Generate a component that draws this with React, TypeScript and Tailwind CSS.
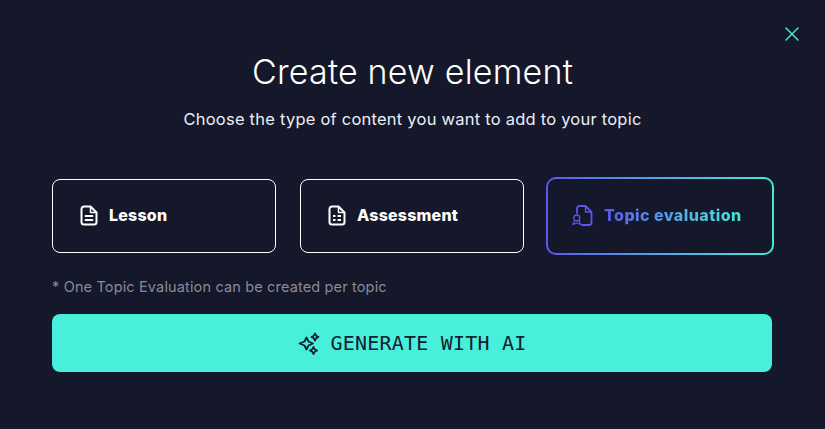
import { X } from "lucide-react";

function LessonIcon() {
  return (
    <svg width="18" height="21" viewBox="0 0 18 21" fill="none" stroke="currentColor" strokeWidth="2" strokeLinejoin="round" strokeLinecap="round">
      <path d="M4 1.500h6.500l6 6V17a2.500 2.500 0 0 1-2.500 2.500H4A2.500 2.500 0 0 1 1.500 17V4A2.500 2.500 0 0 1 4 1.500Z" />
      <path d="M10.500 2V7.500H16" strokeWidth="1.500" />
      <path d="M5.500 11h7M5.500 15h7" strokeWidth="1.800" />
    </svg>
  );
}

function AssessmentIcon() {
  return (
    <svg width="18" height="21" viewBox="0 0 18 21" fill="none" stroke="currentColor" strokeWidth="2" strokeLinejoin="round" strokeLinecap="round">
      <path d="M4 1.500h6.500l6 6V17a2.500 2.500 0 0 1-2.500 2.500H4A2.500 2.500 0 0 1 1.500 17V4A2.500 2.500 0 0 1 4 1.500Z" />
      <path d="M10.500 2V7.500H16" strokeWidth="1.500" />
      <path d="M5 11h2.500M9.500 11H13M5 15h2.500M9.500 15H13" strokeWidth="2" strokeLinecap="butt" />
    </svg>
  );
}

function EvaluationIcon() {
  return (
    <svg width="21" height="21" viewBox="0 0 21 21" fill="none" stroke="#5b56ee" strokeWidth="1.800" strokeLinejoin="round" strokeLinecap="round">
      <path d="M5 8V3.500A2.500 2.500 0 0 1 7.500 1h6l6 6v10.500a2.500 2.500 0 0 1-2.500 2.500H10" />
      <path d="M13.500 1.500V7h5.500" strokeWidth="1.400" />
      <circle cx="4.800" cy="13" r="3" strokeWidth="1.300" />
      <path d="M2.600 15.500 1 19.500l3.800-1.500 3.800 1.500L7 15.500" strokeWidth="1.200" />
    </svg>
  );
}

function SparkleIcon() {
  return (
    <svg width="23" height="23" viewBox="0 0 23 23" fill="none" stroke="#15202e" strokeWidth="1.800" strokeLinejoin="round">
      <path d="M8.500 5.500 10.500 9.500 15 11.500 10.500 13.500 8.500 17.500 6.500 13.500 1.500 11.500 6.500 9.500Z" />
      <path d="M17 1.500 18.200 3.800 20.500 5 18.200 6.200 17 8.500 15.800 6.200 13.500 5 15.800 3.800Z" />
      <path d="M15.500 15 16.700 17.300 19 18.500 16.700 19.700 15.500 22 14.300 19.700 12 18.500 14.300 17.300Z" />
    </svg>
  );
}

function TypeCard({ label, icon }: { label: string; icon: React.ReactNode }) {
  return (
    <button className="w-[224px] h-[74px] rounded-lg border border-white flex items-center gap-[11px] pl-[27px] pb-[2px] text-white">
      {icon}
      <span className="text-[16px] font-extrabold tracking-[0.2px]">{label}</span>
    </button>
  );
}

export default function App() {
  return (
    <div className="relative w-[825px] h-[429px] bg-[#15172b] font-['Inter',sans-serif] overflow-hidden">
      <button className="absolute top-[22px] right-[21px] text-[#45e9d6]">
        <X size={24} strokeWidth={1.5} />
      </button>

      <div className="pt-[49px] px-[52px]">
        <h1 className="text-center text-[34px] leading-[46px] font-light tracking-[0.2px] text-white">Create new element</h1>
        <p className="mt-[12px] text-center text-[16.500px] leading-[24px] tracking-[0.23px] text-[#eceef5]">
          Choose the type of content you want to add to your topic
        </p>

        <div className="mt-[46px] flex items-center gap-[24px] w-[722px]">
          <TypeCard label="Lesson" icon={<LessonIcon />} />
          <TypeCard label="Assessment" icon={<AssessmentIcon />} />
          <div className="-ml-[2px] w-[228px] h-[78px] rounded-[10px] p-[2px] bg-gradient-to-r from-[#5b56ee] to-[#45e9d6]">
            <button className="w-full h-full rounded-lg bg-[#15172b] flex items-center gap-[11px] pl-[24px] pb-[2px]">
              <EvaluationIcon />
              <span className="text-[16px] font-extrabold tracking-[0.45px] bg-gradient-to-r from-[#5b56ee] to-[#45e9d6] bg-clip-text text-transparent">
                Topic evaluation
              </span>
            </button>
          </div>
        </div>

        <p className="mt-[22px] text-[14.500px] leading-[20px] tracking-[0.15px] text-[#8a8b97]">* One Topic Evaluation can be created per topic</p>

        <button className="mt-[17px] w-[720px] h-[58px] rounded-lg bg-[#48f0dc] flex items-center justify-center gap-[10px] text-[#15202e]">
          <SparkleIcon />
          <span className="font-['DejaVu_Sans_Mono',monospace] text-[20px] tracking-[0.2px]">GENERATE WITH AI</span>
        </button>
      </div>
    </div>
  );
}
